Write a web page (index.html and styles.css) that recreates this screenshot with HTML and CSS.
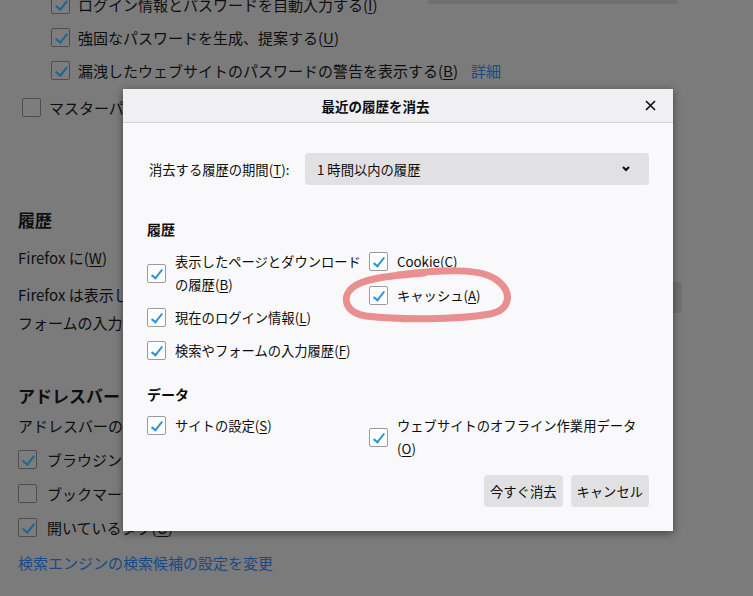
FILE: index.html
```html
<!DOCTYPE html>
<html lang="ja">
<head>
    <meta charset="UTF-8">
    <meta name="viewport" content="width=device-width, initial-scale=1.0">
    <title>最近の履歴を消去</title>
    <link rel="stylesheet" href="styles.css">
</head>
<body>
    <!-- 設定ページ (モーダルの背景) -->
    <div class="prefs-page">
        <div class="top-strip"></div>

        <div class="pref-check sub first">
            <span class="bg-box checked"></span>
            <span>ログイン情報とパスワードを自動入力する(<u>I</u>)</span>
        </div>
        <div class="pref-check sub">
            <span class="bg-box checked"></span>
            <span>強固なパスワードを生成、提案する(<u>U</u>)</span>
        </div>
        <div class="pref-check sub">
            <span class="bg-box checked"></span>
            <span>漏洩したウェブサイトのパスワードの警告を表示する(<u>B</u>)</span>
            <a class="bg-link detail-link">詳細</a>
        </div>
        <div class="pref-check master">
            <span class="bg-box"></span>
            <span>マスターパスワードを使用する(<u>U</u>)</span>
        </div>

        <h2 class="pref-heading history-heading">履歴</h2>
        <div class="pref-line remember-row">Firefox に(<u>W</u>)</div>
        <div class="history-desc">
            <p>Firefox は表示したページ、ファイルのダウンロード履歴、検索や<br>フォームの入力履歴を記憶します。</p>
            <span class="bg-button"></span>
        </div>

        <h2 class="pref-heading address-heading">アドレスバー</h2>
        <div class="pref-line">アドレスバーの使用時に表示する候補</div>
        <div class="pref-check address">
            <span class="bg-box checked"></span>
            <span>ブラウジング履歴(<u>H</u>)</span>
        </div>
        <div class="pref-check address">
            <span class="bg-box"></span>
            <span>ブックマーク(<u>K</u>)</span>
        </div>
        <div class="pref-check address">
            <span class="bg-box checked"></span>
            <span>開いているタブ(<u>O</u>)</span>
        </div>
        <a class="bg-link search-link">検索エンジンの検索候補の設定を変更</a>
    </div>

    <!-- 最近の履歴を消去ダイアログ -->
    <div class="dialog">
        <div class="dialog-header">
            <h1 class="dialog-title">最近の履歴を消去</h1>
            <button class="close-button" aria-label="閉じる">
                <svg width="11" height="11" viewBox="0 0 11 11">
                    <path d="M1 1 L10 10 M10 1 L1 10" stroke="#0c0c0d" stroke-width="1.6" fill="none"/>
                </svg>
            </button>
        </div>

        <div class="dialog-body">
            <div class="period-row">
                <label class="period-label">消去する履歴の期間(<u>T</u>):</label>
                <div class="period-select">
                    <span>1 時間以内の履歴</span>
                    <svg width="10" height="6" viewBox="0 0 10 6">
                        <path d="M2 1 L5 4 L8 1" stroke="#0c0c0d" stroke-width="2" fill="none"/>
                    </svg>
                </div>
            </div>

            <h2 class="section-title history-title">履歴</h2>
            <div class="option-grid">
                <div class="option-col left-col">
                    <div class="option">
                        <span class="checkbox checked"></span>
                        <span>表示したページとダウンロード<br>の履歴(<u>B</u>)</span>
                    </div>
                    <div class="option">
                        <span class="checkbox checked"></span>
                        <span>現在のログイン情報(<u>L</u>)</span>
                    </div>
                    <div class="option">
                        <span class="checkbox checked"></span>
                        <span>検索やフォームの入力履歴(<u>F</u>)</span>
                    </div>
                </div>
                <div class="option-col right-col">
                    <div class="option">
                        <span class="checkbox checked"></span>
                        <span>Cookie(<u>C</u>)</span>
                    </div>
                    <div class="option">
                        <span class="checkbox checked"></span>
                        <span>キャッシュ(<u>A</u>)</span>
                    </div>
                </div>
            </div>

            <h2 class="section-title data-title">データ</h2>
            <div class="option-grid data-grid">
                <div class="option top">
                    <span class="checkbox checked"></span>
                    <span>サイトの設定(<u>S</u>)</span>
                </div>
                <div class="option">
                    <span class="checkbox checked"></span>
                    <span>ウェブサイトのオフライン作業用データ<br>(<u>O</u>)</span>
                </div>
            </div>

            <div class="dialog-buttons">
                <button class="dialog-button">今すぐ消去</button>
                <button class="dialog-button">キャンセル</button>
            </div>
        </div>
    </div>

    <!-- 手書きの赤い丸 -->
    <svg class="annotation" width="753" height="596" viewBox="0 0 753 596">
        <path d="M398 275 C440 270, 482 267, 498 281 C513 293, 510 310, 490 314 C455 320, 400 320, 366 316 C346 313, 341 298, 352 288 C362 279, 386 276, 424 273"
              stroke="#e98f8f" stroke-width="7" stroke-linecap="round" fill="none"/>
    </svg>
</body>
</html>
```

FILE: styles.css
```css
* {
    margin: 0;
    padding: 0;
    box-sizing: border-box;
}

body {
    font-family: "Noto Sans CJK JP", sans-serif;
    background-color: #7b7b7b;
    color: #0e0e0e;
    width: 753px;
    height: 596px;
    overflow: hidden;
    position: relative;
}

u {
    text-decoration-thickness: 1px;
    text-underline-offset: 2px;
}

/* 背景の設定ページ */

.prefs-page {
    padding: 0 71px 0 18px;
    font-size: 15px;
}

.top-strip {
    height: 4px;
    width: 249px;
    margin-left: 410px;
    background-color: #707072;
}

.pref-check {
    display: flex;
    align-items: center;
    gap: 8px;
    height: 33px;
    white-space: nowrap;
}

.pref-check.sub {
    margin-left: 33px;
}

.pref-check.first {
    margin-top: -16px;
}

.pref-check.master {
    margin-left: 4px;
    margin-top: 4px;
}

.pref-check.address {
    height: 34px;
    gap: 10px;
}

.bg-box {
    width: 19px;
    height: 19px;
    flex-shrink: 0;
    border: 1px solid #4e4e50;
    border-radius: 2px;
    background-color: #7d7d7e;
    position: relative;
}

.bg-box.checked::after {
    content: "";
    position: absolute;
    left: 6px;
    top: 2px;
    width: 5px;
    height: 10px;
    border: solid #1d6690;
    border-width: 0 2px 2px 0;
    transform: rotate(38deg);
}

.bg-link {
    color: #1a4a86;
    cursor: pointer;
}

.detail-link {
    margin-left: 5px;
}

.pref-heading {
    font-size: 17px;
    font-weight: 700;
    line-height: 24px;
}

.history-heading {
    margin-top: 84px;
}

.address-heading {
    margin-top: 46px;
    line-height: 26px;
}

.pref-line {
    height: 33px;
    line-height: 33px;
    white-space: nowrap;
}

.remember-row {
    margin-top: 9px;
}

.history-desc {
    display: flex;
    align-items: flex-start;
    margin-top: 7px;
}

.history-desc p {
    line-height: 28px;
    white-space: nowrap;
}

.bg-button {
    margin-left: auto;
    margin-top: 1px;
    width: 150px;
    height: 31px;
    background-color: #707072;
    border-radius: 3px;
}

.search-link {
    display: block;
    margin-top: 7px;
    line-height: 24px;
}

/* ダイアログ */

.dialog {
    position: absolute;
    left: 123px;
    top: 89px;
    width: 550px;
    background-color: #f9f9fb;
    box-shadow: 0 2px 8px rgba(0, 0, 0, 0.45);
    color: #0c0c0d;
    font-size: 13.3px;
}

.dialog-header {
    display: flex;
    align-items: center;
    height: 34px;
    background-color: #f0f0f2;
    border-bottom: 1px solid #d4d4d8;
}

.dialog-title {
    flex: 1;
    text-align: center;
    font-size: 13.5px;
    font-weight: 700;
}

.close-button {
    width: 45px;
    height: 33px;
    border: none;
    background: none;
    display: flex;
    align-items: center;
    justify-content: center;
    cursor: pointer;
}

.dialog-body {
    padding: 30px 24px 24px;
}

.period-row {
    display: flex;
    align-items: center;
    gap: 10px;
}

.period-label {
    flex: 1;
    margin-left: 2px;
    white-space: nowrap;
}

.period-select {
    width: 344px;
    height: 32px;
    display: flex;
    align-items: center;
    justify-content: space-between;
    padding: 0 18px 0 12px;
    background-color: #e1e1e4;
    border-radius: 4px;
}

.section-title {
    font-size: 14px;
    font-weight: 700;
    line-height: 20px;
}

.history-title {
    margin-top: 34px;
}

.data-title {
    margin-top: 22px;
}

.option-grid {
    display: grid;
    grid-template-columns: 222px 1fr;
    margin-top: 11px;
}

.data-grid {
    margin-top: 10px;
    align-items: start;
}

.option-col {
    display: flex;
    flex-direction: column;
}

.left-col {
    gap: 10px;
}

.right-col {
    gap: 11px;
}

.option {
    display: flex;
    align-items: center;
    gap: 10px;
    line-height: 23px;
    white-space: nowrap;
}

.checkbox {
    width: 19px;
    height: 19px;
    flex-shrink: 0;
    border: 1px solid #9a9aa2;
    border-radius: 2px;
    background-color: white;
    position: relative;
}

.checkbox.checked::after {
    content: "";
    position: absolute;
    left: 6px;
    top: 2px;
    width: 4px;
    height: 10px;
    border: solid #2a93d6;
    border-width: 0 2px 2px 0;
    transform: rotate(38deg);
}

.option .checkbox + span {
    margin-left: -1px;
}

.dialog-buttons {
    display: flex;
    justify-content: flex-end;
    gap: 8px;
    margin-top: 15px;
}

.dialog-button {
    min-width: 78px;
    height: 32px;
    padding: 0 6px;
    border: none;
    border-radius: 4px;
    background-color: #e1e1e4;
    color: #0c0c0d;
    font-family: inherit;
    font-size: 13.3px;
    cursor: pointer;
}

.annotation {
    position: absolute;
    left: 0;
    top: 0;
    pointer-events: none;
}
```
